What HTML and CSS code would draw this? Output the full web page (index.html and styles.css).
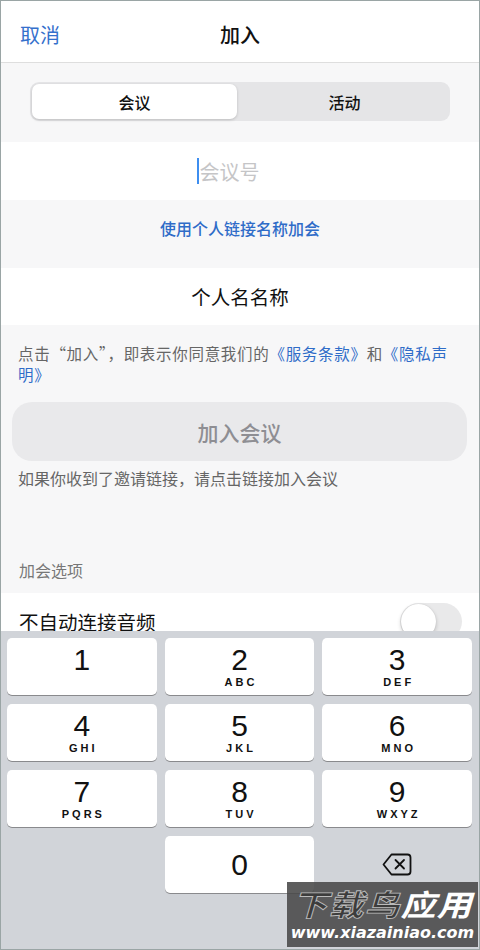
FILE: index.html
```html
<!DOCTYPE html>
<html lang="zh-CN">

<head>
    <meta charset="UTF-8">
    <meta name="viewport" content="width=device-width, initial-scale=1.0">
    <link rel="stylesheet" href="styles.css">
    <title>加入</title>
</head>

<body>
    <div class="screen">

        <div class="content">
            <div class="header">
                <span class="cancel">取消</span>
                <span class="title">加入</span>
            </div>

            <div class="segment-wrap">
                <div class="segment">
                    <div class="seg-item active">会议</div>
                    <div class="seg-item">活动</div>
                </div>
            </div>

            <div class="field">
                <span class="cursor"></span><span class="placeholder">会议号</span>
            </div>

            <div class="alt-link">使用个人链接名称加会</div>

            <div class="field name">个人名名称</div>

            <p class="terms">点击“加入”，即表示你同意我们的<a>《服务条款》</a>和<a>《隐私声明》</a></p>

            <div class="join-btn">加入会议</div>

            <p class="hint">如果你收到了邀请链接，请点击链接加入会议</p>

            <p class="section-label">加会选项</p>

            <div class="option">
                <span>不自动连接音频</span>
                <span class="toggle"><span class="knob"></span></span>
            </div>
        </div>

        <div class="keyboard">
            <div class="key"><span class="digit">1</span><span class="letters">&nbsp;</span></div>
            <div class="key"><span class="digit">2</span><span class="letters">ABC</span></div>
            <div class="key"><span class="digit">3</span><span class="letters">DEF</span></div>
            <div class="key"><span class="digit">4</span><span class="letters">GHI</span></div>
            <div class="key"><span class="digit">5</span><span class="letters">JKL</span></div>
            <div class="key"><span class="digit">6</span><span class="letters">MNO</span></div>
            <div class="key"><span class="digit">7</span><span class="letters">PQRS</span></div>
            <div class="key"><span class="digit">8</span><span class="letters">TUV</span></div>
            <div class="key"><span class="digit">9</span><span class="letters">WXYZ</span></div>
            <div class="key blank"></div>
            <div class="key zero"><span class="digit">0</span></div>
            <div class="key blank backspace">
                <svg width="30" height="23" viewBox="0 0 30 23">
                    <path d="M9.5 1.5 H25.5 A3 3 0 0 1 28.5 4.5 V18.5 A3 3 0 0 1 25.5 21.5 H9.5 L1.5 11.5 Z" fill="none" stroke="#111" stroke-width="1.8" stroke-linejoin="round" />
                    <path d="M13.5 7 L22 15.5 M22 7 L13.5 15.5" stroke="#111" stroke-width="1.8" stroke-linecap="round" />
                </svg>
            </div>
        </div>

        <div class="watermark">
            <div class="wm-title"><span class="wm-dark">下载鸟</span>应用</div>
            <div class="wm-url">www.xiazainiao.com</div>
        </div>

    </div>
</body>

</html>
```

FILE: styles.css
```css
html {
    box-sizing: border-box;
}

*,
*::before,
*::after {
    margin: 0;
    padding: 0;
    box-sizing: inherit;
}

body {
    width: 480px;
    height: 950px;
    overflow: hidden;
    font-family: "Noto Sans CJK SC", "Noto Sans", sans-serif;
    color: #111;
}

.screen {
    position: relative;
    height: 950px;
    border: 1px solid #9aa5a5;
    display: flex;
    flex-direction: column;
    background-color: #f7f7f8;
}

.content {
    height: 630px;
    overflow: hidden;
}

.header {
    height: 62px;
    padding-top: 6px;
    background-color: #fff;
    border-bottom: 1px solid #dedede;
    display: flex;
    align-items: center;
    justify-content: center;
    position: relative;
}

.cancel {
    position: absolute;
    left: 19px;
    font-size: 20px;
    color: #3470cc;
}

.title {
    font-size: 20px;
    font-weight: 500;
}

.segment-wrap {
    padding: 19px 29px 21px 29px;
}

.segment {
    display: flex;
    height: 39px;
    padding: 2px;
    background-color: #e5e5e7;
    border-radius: 9px;
}

.seg-item {
    flex: 1;
    display: flex;
    align-items: center;
    justify-content: center;
    font-size: 16px;
    font-weight: 500;
    padding-left: 4px;
}

.seg-item.active {
    flex: 0 0 205px;
    padding-left: 0;
    background-color: #fff;
    border-radius: 7px;
    box-shadow: 0 1px 3px rgba(0, 0, 0, 0.18);
}

.field {
    height: 58px;
    background-color: #fff;
    display: flex;
    align-items: center;
    justify-content: center;
    font-size: 19.5px;
}

.field.name {
    height: 57px;
}

.cursor {
    width: 2px;
    height: 26px;
    background-color: #3d8ef0;
    margin-right: 1px;
}

.placeholder {
    font-size: 20px;
    color: #c5c5c7;
    margin-right: 24px;
}

.alt-link {
    height: 68px;
    display: flex;
    align-items: center;
    justify-content: center;
    padding-bottom: 12px;
    font-size: 16px;
    font-weight: 500;
    color: #2f6cc8;
}

.terms {
    padding: 18px 30px 0 17px;
    font-size: 15.5px;
    line-height: 21px;
    letter-spacing: 0.7px;
    color: #666;
}

.terms a {
    color: #2f6cc8;
}

.join-btn {
    height: 59px;
    margin: 17px 12px 0 11px;
    border-radius: 20px;
    background-color: #e9e9eb;
    display: flex;
    align-items: center;
    justify-content: center;
    font-size: 21px;
    font-weight: 500;
    color: #8e8e93;
}

.hint {
    margin-top: 7px;
    padding-left: 17px;
    font-size: 16px;
    line-height: 21px;
    color: #666;
}

.section-label {
    margin: 71px 0 12px;
    padding-left: 18px;
    font-size: 16px;
    line-height: 21px;
    color: #777;
}

.option {
    height: 56px;
    background-color: #fff;
    display: flex;
    align-items: center;
    justify-content: space-between;
    padding: 0 17px 0 18px;
    font-size: 19.5px;
}

.toggle {
    width: 62px;
    height: 37px;
    border-radius: 19px;
    background-color: #e9e9ea;
    padding: 1px;
    display: flex;
}

.knob {
    width: 35px;
    height: 35px;
    border-radius: 50%;
    background-color: #fff;
    box-shadow: 0 2px 4px rgba(0, 0, 0, 0.2), 0 0 1px rgba(0, 0, 0, 0.15);
}

.keyboard {
    flex: 1;
    background-color: #d1d4d9;
    display: grid;
    grid-template-columns: repeat(3, 1fr);
    grid-template-rows: repeat(4, 57px);
    column-gap: 8px;
    row-gap: 9px;
    padding: 7px 7px 0 6px;
    font-family: "Liberation Sans", Arial, sans-serif;
}

.key {
    background-color: #fff;
    border-radius: 5px;
    box-shadow: 0 1px 0 #898a8d;
    display: flex;
    flex-direction: column;
    align-items: center;
    padding-top: 6px;
}

.digit {
    font-size: 30px;
    line-height: 32px;
}

.letters {
    font-size: 11px;
    font-weight: 700;
    letter-spacing: 3px;
    margin-right: -3px;
    line-height: 12px;
}

.key.zero {
    justify-content: center;
    padding-top: 0;
}

.key.blank {
    background: none;
    box-shadow: none;
}

.backspace {
    justify-content: center;
    padding-top: 0;
}

.watermark {
    position: absolute;
    left: 286px;
    top: 881px;
    width: 191px;
    height: 65px;
    background-color: rgba(72, 72, 72, 0.88);
    display: flex;
    flex-direction: column;
    align-items: center;
    font-style: italic;
    font-weight: 700;
    color: #fff;
}

.wm-title {
    font-size: 35px;
    line-height: 41px;
    letter-spacing: 1px;
    transform: scaleY(0.85);
}

.wm-dark {
    color: #3c3c3c;
    -webkit-text-stroke: 1px #bbb;
}

.wm-url {
    font-family: "DejaVu Sans", sans-serif;
    font-size: 16px;
    line-height: 20px;
}
```
